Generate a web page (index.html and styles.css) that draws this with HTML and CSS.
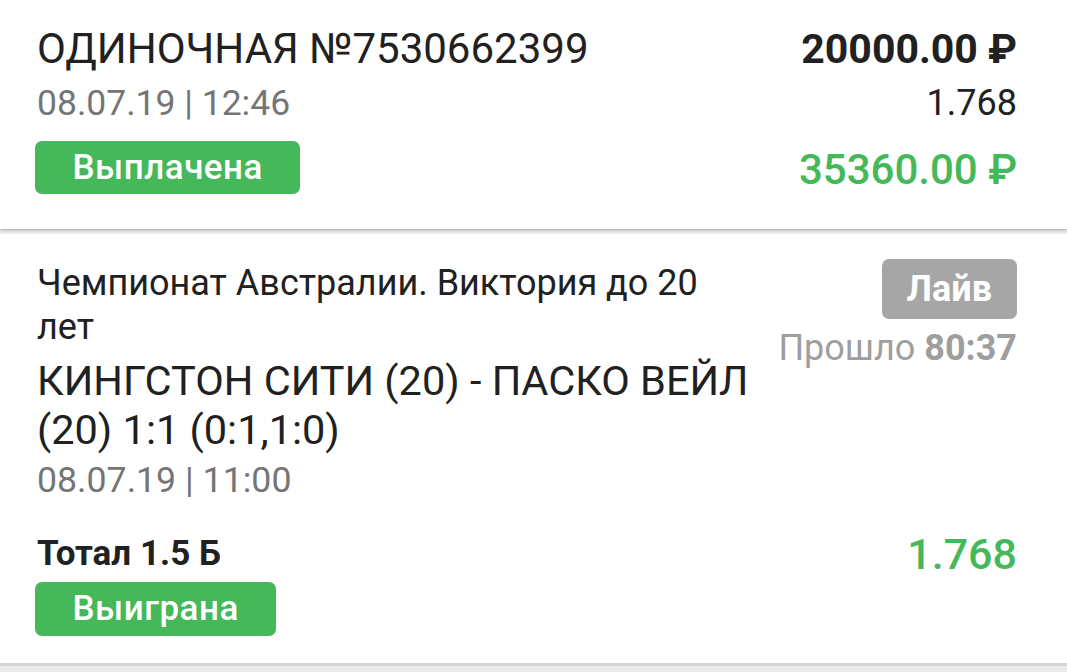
FILE: index.html
```html
<!DOCTYPE html>
<html lang="ru">
<head>
    <meta charset="UTF-8">
    <meta name="viewport" content="width=device-width, initial-scale=1.0">
    <title>Ставка №7530662399</title>
    <link rel="stylesheet" href="styles.css">
</head>
<body>
    <!-- Шапка ставки -->
    <div class="card bet">
        <div class="bet-left">
            <div class="bet-title">ОДИНОЧНАЯ №7530662399</div>
            <div class="bet-date">08.07.19 | 12:46</div>
            <span class="badge badge-green">Выплачена</span>
        </div>
        <div class="bet-right">
            <div class="bet-sum">20000.00 ₽</div>
            <div class="bet-coef">1.768</div>
            <div class="bet-win">35360.00 ₽</div>
        </div>
    </div>

    <!-- Событие -->
    <div class="card event">
        <div class="event-head">
            <div class="event-left">
                <div class="event-league">Чемпионат Австралии. Виктория до 20 лет</div>
                <div class="event-teams">КИНГСТОН СИТИ (20) - ПАСКО ВЕЙЛ (20) 1:1 (0:1,1:0)</div>
                <div class="event-date">08.07.19 | 11:00</div>
            </div>
            <div class="event-right">
                <span class="badge badge-grey">Лайв</span>
                <div class="event-time">Прошло <b>80:37</b></div>
            </div>
        </div>
        <div class="market">
            <div class="market-left">
                <div class="market-name">Тотал 1.5 Б</div>
                <span class="badge badge-green badge-small">Выиграна</span>
            </div>
            <div class="market-coef">1.768</div>
        </div>
    </div>
</body>
</html>
```

FILE: styles.css
```css
body {
    margin: 0;
    background: #ebebeb;
    font-family: Roboto, 'Noto Sans', Arial, sans-serif;
    color: #212121;
}
.card {
    background: #fff;
    padding: 0 50px 0 37px;
}
.bet {
    display: flex;
    justify-content: space-between;
    padding-top: 23px;
    padding-bottom: 33px;
    box-shadow: 0 1px 3px rgba(0,0,0,0.3);
    margin-bottom: 5px;
}
.bet-left, .market-left {
    display: flex;
    flex-direction: column;
    align-items: flex-start;
}
.bet-title {
    font-size: 42px;
    line-height: 52px;
}
.bet-date {
    font-size: 35.5px;
    line-height: 52px;
    margin-top: 2px;
    color: #757575;
}
.badge {
    display: block;
    color: #fff;
    font-weight: 500;
    border-radius: 7px;
}
.badge-green {
    background: #45b85a;
    font-size: 35px;
    letter-spacing: 0.5px;
    line-height: 53px;
    height: 53px;
    padding: 0 37.5px;
    margin-left: -2px;
    margin-top: 12px;
}
.badge-small {
    height: 54px;
    line-height: 54px;
    margin-top: 8px;
}
.badge-grey {
    background: #a6a6a6;
    font-size: 36px;
    font-weight: 700;
    height: 60px;
    line-height: 60px;
    padding: 0 25px;
}
.bet-right {
    text-align: right;
}
.bet-sum {
    font-size: 41px;
    line-height: 52px;
    font-weight: 700;
}
.bet-coef {
    font-size: 36px;
    line-height: 52px;
    margin-top: 2px;
}
.bet-win {
    font-size: 42px;
    line-height: 53px;
    font-weight: 500;
    color: #45b85a;
    margin-top: 14px;
}
.event {
    padding-top: 25px;
    padding-bottom: 27px;
    border-bottom: 3px solid #d4d4d4;
}
.event-head {
    display: flex;
    justify-content: space-between;
}
.event-left {
    width: 716px;
}
.event-league {
    font-size: 36px;
    line-height: 44px;
    margin-top: 2px;
}
.event-teams {
    font-size: 41.5px;
    line-height: 49px;
    margin-top: 7px;
}
.event-date {
    font-size: 35.7px;
    line-height: 44px;
    margin-top: 4px;
    color: #757575;
}
.event-right {
    display: flex;
    flex-direction: column;
    align-items: flex-end;
}
.event-time {
    font-size: 36px;
    line-height: 40px;
    margin-top: 9px;
    color: #9e9e9e;
    white-space: nowrap;
}
.event-time b {
    font-weight: 700;
}
.market {
    display: flex;
    justify-content: space-between;
    margin-top: 32px;
}
.market-name {
    font-size: 35px;
    line-height: 40px;
    font-weight: 700;
}
.market-coef {
    font-size: 43px;
    line-height: 40px;
    font-weight: 500;
    color: #45b85a;
}
```
